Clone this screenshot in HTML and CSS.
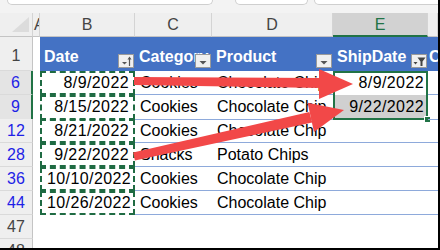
FILE: index.html
```html
<!DOCTYPE html>
<html lang="en">
<head>
    <meta charset="UTF-8">
    <title>Filtered dates</title>
    <link rel="stylesheet" href="styles.css">
</head>
<body>
    <div class="sheet">
        <div class="topbar">
            <span class="box box-name"></span>
            <span class="box box-mid"></span>
            <span class="box box-formula"></span>
        </div>

        <div class="row colhead">
            <div class="corner">
                <svg width="17" height="15" viewBox="0 0 17 15"><polygon points="17,0 17,15 0,15" fill="#dcdcdc"/></svg>
            </div>
            <div class="letter letter-a">A</div>
            <div class="letter">B</div>
            <div class="letter">C</div>
            <div class="letter">D</div>
            <div class="letter active">E</div>
            <div class="letter"></div>
        </div>

        <div class="row thead">
            <div class="num">1</div>
            <div class="acol"></div>
            <div class="th">Date
                <span class="filter">
                    <svg width="14" height="12" viewBox="0 0 14 12"><polygon points="3,7 8,7 5.5,9.5" fill="#555"/><line x1="10.5" y1="3" x2="10.5" y2="11" stroke="#555" stroke-width="1.2"/><polygon points="8.5,4.5 10.5,1.5 12.5,4.5" fill="#555"/></svg>
                </span>
            </div>
            <div class="th">Category
                <span class="filter">
                    <svg width="14" height="12" viewBox="0 0 14 12"><polygon points="3.5,6 10.5,6 7,9.5" fill="#555"/></svg>
                </span>
            </div>
            <div class="th">Product
                <span class="filter">
                    <svg width="14" height="12" viewBox="0 0 14 12"><polygon points="3.5,6 10.5,6 7,9.5" fill="#555"/></svg>
                </span>
            </div>
            <div class="th">ShipDate
                <span class="filter">
                    <svg width="14" height="12" viewBox="0 0 14 12"><polygon points="1.5,7 5.5,7 3.5,9.5" fill="#444"/><polygon points="5.5,2.5 13.5,2.5 10.5,6.5 10.5,11 8.5,11 8.5,6.5" fill="#444"/></svg>
                </span>
            </div>
            <div class="th th-last">Customer</div>
        </div>

        <div class="row">
            <div class="num filtered picked">6</div>
            <div class="acol"></div>
            <div class="td date ants">8/9/2022</div>
            <div class="td">Cookies</div>
            <div class="td">Chocolate Chip</div>
            <div class="td date sel-top">8/9/2022</div>
            <div class="td"></div>
        </div>
        <div class="row">
            <div class="num filtered picked">9</div>
            <div class="acol"></div>
            <div class="td date ants">8/15/2022</div>
            <div class="td">Cookies</div>
            <div class="td">Chocolate Chip</div>
            <div class="td date sel-bottom">9/22/2022<span class="handle"></span></div>
            <div class="td"></div>
        </div>
        <div class="row">
            <div class="num filtered">12</div>
            <div class="acol"></div>
            <div class="td date ants">8/21/2022</div>
            <div class="td">Cookies</div>
            <div class="td">Chocolate Chip</div>
            <div class="td"></div>
            <div class="td"></div>
        </div>
        <div class="row">
            <div class="num filtered">28</div>
            <div class="acol"></div>
            <div class="td date ants">9/22/2022</div>
            <div class="td">Snacks</div>
            <div class="td">Potato Chips</div>
            <div class="td"></div>
            <div class="td"></div>
        </div>
        <div class="row">
            <div class="num filtered">36</div>
            <div class="acol"></div>
            <div class="td date ants">10/10/2022</div>
            <div class="td">Cookies</div>
            <div class="td">Chocolate Chip</div>
            <div class="td"></div>
            <div class="td"></div>
        </div>
        <div class="row">
            <div class="num filtered">44</div>
            <div class="acol"></div>
            <div class="td date ants">10/26/2022</div>
            <div class="td">Cookies</div>
            <div class="td">Chocolate Chip</div>
            <div class="td"></div>
            <div class="td"></div>
        </div>
        <div class="row empty">
            <div class="num">47</div>
            <div class="acol"></div>
            <div class="td"></div>
            <div class="td"></div>
            <div class="td"></div>
            <div class="td"></div>
            <div class="td"></div>
        </div>
        <div class="row empty">
            <div class="num">48</div>
            <div class="acol"></div>
            <div class="td"></div>
            <div class="td"></div>
            <div class="td"></div>
            <div class="td"></div>
            <div class="td"></div>
        </div>

        <!-- red callout arrows drawn over the grid -->
        <svg class="arrows" width="440" height="250" viewBox="0 0 440 250">
            <polygon points="134,77 321,78 321,88 134,85" fill="#f24848"/>
            <polygon points="319,69 353,84 319,99" fill="#f24848"/>
            <polygon points="134.9,160.4 312.2,122.6 309.4,111.9 133.1,152.6" fill="#f24848"/>
            <polygon points="307.6,102.7 344,110 314,132" fill="#f24848"/>
        </svg>
    </div>
</body>
</html>
```

FILE: styles.css
```css
* {
    margin: 0;
    padding: 0;
    box-sizing: border-box;
}

body {
    width: 440px;
    height: 250px;
    overflow: hidden;
    background: #fff;
    font-family: "Liberation Sans", Arial, sans-serif;
    font-size: 16px;
    color: #000;
}

.sheet {
    position: relative;
    width: 440px;
    height: 250px;
    overflow: hidden;
    border-right: 2px solid #000;
    border-bottom: 2px solid #000;
}

.topbar {
    display: flex;
    height: 13px;
    background: #f3f3f3;
    padding-left: 7px;
}

.box {
    display: block;
    height: 5px;
    background: #fff;
    border: 1px solid #cfcfcf;
    border-top: none;
    border-radius: 0 0 5px 5px;
}

.box-name {
    width: 206px;
}

.box-mid {
    width: 73px;
    margin-left: 22px;
}

.box-formula {
    flex: 1;
    margin-left: 6px;
    margin-right: -6px;
}

.row {
    display: grid;
    grid-template-columns: 33px 7px 95px 77px 121px 95px 1fr;
    height: 24px;
}

/* column letters */
.colhead {
    height: 24px;
    background: #efefef;
}

.corner {
    display: flex;
    justify-content: flex-end;
    align-items: flex-end;
    padding: 0 3px 4px 0;
    border-right: 1px solid #d4d4d4;
    border-bottom: 1px solid #c4c4c4;
}

.letter {
    text-align: center;
    line-height: 24px;
    color: #444;
    border-right: 1px solid #d4d4d4;
    border-bottom: 1px solid #c4c4c4;
    overflow: hidden;
}

.letter-a {
    text-align: left;
    padding-left: 1px;
    white-space: nowrap;
}

.letter.active {
    background: #d2d2d2;
    color: #217346;
    border-bottom: 2px solid #217346;
}

/* row numbers */
.num {
    background: #efefef;
    color: #444;
    text-align: center;
    line-height: 23px;
    border-right: 1px solid #c4c4c4;
    border-bottom: 1px solid #dadada;
}

.num.filtered {
    color: #1f1fe6;
}

.num.picked {
    background: #e4e4e4;
    border-right: 2px solid #217346;
}

.acol {
    background: #fff;
}

/* table header */
.thead {
    height: 34px;
}

.thead .num {
    display: flex;
    align-items: flex-end;
    justify-content: center;
    padding-bottom: 4px;
    line-height: 20px;
}

.th {
    position: relative;
    display: flex;
    align-items: flex-end;
    padding: 0 0 4px 4px;
    background: #4472c4;
    color: #fff;
    font-weight: bold;
    line-height: 20px;
    white-space: nowrap;
    overflow: hidden;
}

.th-last {
    padding-left: 1px;
}

.filter {
    position: absolute;
    right: 1px;
    bottom: 3px;
    width: 16px;
    height: 14px;
    display: flex;
    align-items: center;
    justify-content: center;
    background: #f0f0f0;
    border: 1px solid #9a9a9a;
}

/* data cells */
.td {
    position: relative;
    padding: 1px 5px 0 5px;
    line-height: 22px;
    white-space: nowrap;
    overflow: hidden;
    border-bottom: 1px solid #8eaadb;
}

.td.date {
    text-align: right;
    padding-right: 4px;
    letter-spacing: 0.4px;
}

.ants {
    border: 2px dashed #1f6b43;
    padding-top: 0;
    line-height: 20px;
}

.sel-top {
    border-bottom: none;
    box-shadow: inset 2px 0 #217346, inset -2px 0 #217346, inset 0 2px #217346;
    overflow: visible;
}

.sel-bottom {
    background: #d0d0d0;
    border-bottom: 2px solid #217346;
    box-shadow: inset 2px 0 #217346, inset -2px 0 #217346;
    overflow: visible;
}

.handle {
    position: absolute;
    right: -3px;
    bottom: -5px;
    width: 7px;
    height: 7px;
    background: #217346;
    border: 1px solid #fff;
}

.empty .td {
    border-bottom: none;
}

.arrows {
    position: absolute;
    top: 0;
    left: 0;
    pointer-events: none;
}
```
